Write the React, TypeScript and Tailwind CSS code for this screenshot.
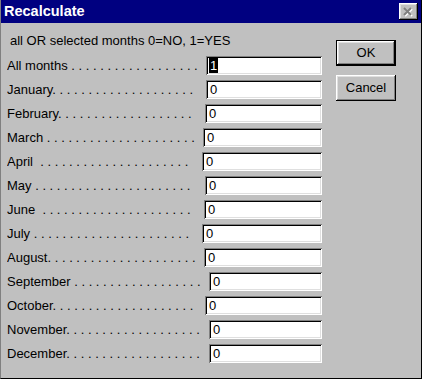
const rows = [
  { label: 'All months .', n: 17, lw: 'w-[192px]', iw: 'w-[116px]', value: '1', selected: true },
  { label: 'January.', n: 19, lw: 'w-[192px]', iw: 'w-[116px]', value: '0' },
  { label: 'February.', n: 18, lw: 'w-[191px]', iw: 'w-[117px]', value: '0' },
  { label: 'March .', n: 20, lw: 'w-[189px]', iw: 'w-[119px]', value: '0' },
  { label: 'April  .', n: 20, lw: 'w-[188px]', iw: 'w-[120px]', value: '0' },
  { label: 'May .', n: 21, lw: 'w-[191px]', iw: 'w-[117px]', value: '0' },
  { label: 'June  .', n: 20, lw: 'w-[190px]', iw: 'w-[118px]', value: '0' },
  { label: 'July .', n: 21, lw: 'w-[188px]', iw: 'w-[120px]', value: '0' },
  { label: 'August.', n: 20, lw: 'w-[190px]', iw: 'w-[118px]', value: '0' },
  { label: 'September .', n: 17, lw: 'w-[195px]', iw: 'w-[113px]', value: '0' },
  { label: 'October.', n: 19, lw: 'w-[191px]', iw: 'w-[117px]', value: '0' },
  { label: 'November.', n: 18, lw: 'w-[195px]', iw: 'w-[113px]', value: '0' },
  { label: 'December.', n: 18, lw: 'w-[195px]', iw: 'w-[113px]', value: '0' },
];

const bevel =
  'shadow-[inset_-1px_-1px_#000,inset_1px_1px_#fff,inset_-2px_-2px_#808080,inset_2px_2px_#dfdfdf]';
const sunken =
  'shadow-[inset_1px_1px_#808080,inset_-1px_-1px_#fff,inset_2px_2px_#000,inset_-2px_-2px_#dfdfdf]';

export default function App() {
  return (
    <div className="w-[422px] h-[379px] bg-[#c0c0c0] border-l border-l-[#808080] border-r border-r-black border-b border-b-black flex flex-col font-['Liberation_Sans',Arial,sans-serif] text-black overflow-hidden">
      {/* Title bar */}
      <div className="h-[23px] shrink-0 bg-[#000080] flex items-center justify-between pl-[3px] pr-[3px]">
        <span className="text-white font-bold text-[14.5px] leading-none">Recalculate</span>
        <div className={`w-[19px] h-[17px] bg-[#c0c0c0] flex items-center justify-center ${bevel}`}>
          <svg width="11" height="10" viewBox="0 0 11 10">
            <path d="M2 2 L9 9 M9 2 L2 9" stroke="#fff" strokeWidth="2" />
            <path d="M1 1 L8 8 M8 1 L1 8" stroke="#808080" strokeWidth="2" />
          </svg>
        </div>
      </div>

      {/* Body */}
      <div className="flex">
        <div className="flex flex-col">
          <div className="pl-[9px] pt-[10px] text-[13px] leading-[15px]">all OR selected months 0=NO, 1=YES</div>
          <div className="mt-[8px] flex flex-col gap-[5px]">
            {rows.map((r) => (
              <div key={r.label} className="h-[19px] flex items-center pl-[6px]">
                <div className={`${r.lw} overflow-hidden whitespace-pre text-[13px] leading-[15px]`}>
                  {r.label + ' .'.repeat(r.n)}
                </div>
                <div className={`${r.iw} ml-[7px] h-[19px] bg-white ${sunken} flex items-center pl-[3px]`}>
                  {r.selected ? (
                    <span className="bg-black text-white text-[13px] leading-[15px] px-px">{r.value}</span>
                  ) : (
                    <span className="text-[13px] leading-[15px] pl-px">{r.value}</span>
                  )}
                </div>
              </div>
            ))}
          </div>
        </div>

        {/* Buttons */}
        <div className="ml-[14px] pt-[17px] flex flex-col gap-[9px]">
          <div className="w-[60px] h-[26px] border border-black">
            <div className={`w-full h-full flex items-center justify-center text-[13px] ${bevel}`}>OK</div>
          </div>
          <div className={`w-[60px] h-[26px] flex items-center justify-center text-[13px] ${bevel}`}>Cancel</div>
        </div>
      </div>
    </div>
  );
}
